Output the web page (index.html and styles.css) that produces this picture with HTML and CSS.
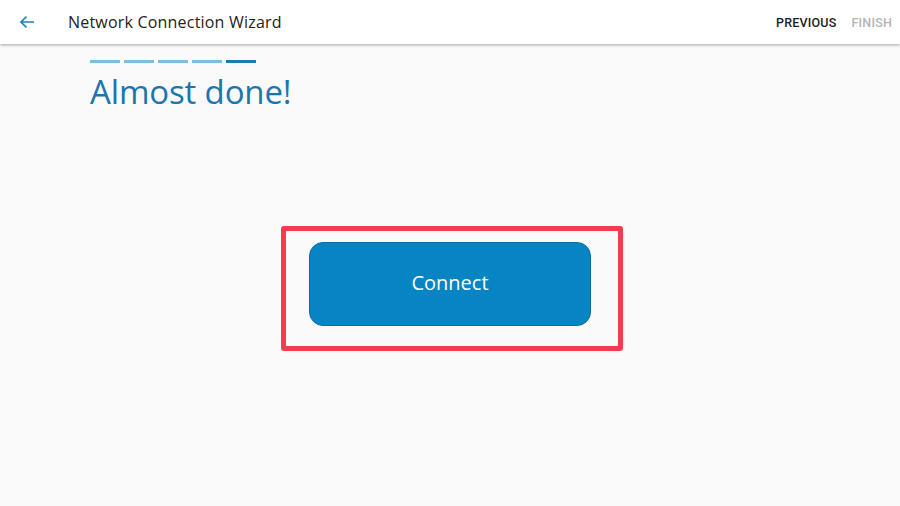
FILE: index.html
```html
<!DOCTYPE html>
<html>
<head>
<meta charset="utf-8">
<link rel="stylesheet" href="styles.css">
</head>
<body>
<header class="topbar">
  <div class="left">
    <span class="back">
      <svg width="16" height="14" viewBox="0 0 16 14"><path d="M15 7H2M7.5 1.5L2 7l5.5 5.5" fill="none" stroke="#1f7fbf" stroke-width="1.7"/></svg>
    </span>
    <span class="title">Network Connection Wizard</span>
  </div>
  <div class="actions">
    <span class="act prev">PREVIOUS</span>
    <span class="act fin">FINISH</span>
  </div>
</header>
<main class="content">
  <div class="steps">
    <span class="step"></span><span class="step"></span><span class="step"></span><span class="step"></span><span class="step cur"></span>
  </div>
  <h1 class="heading">Almost done!</h1>
  <div class="center">
    <div class="highlight">
      <button class="connect">Connect</button>
    </div>
  </div>
</main>
</body>
</html>
```
FILE: styles.css
```css
html, body { margin: 0; padding: 0; }
body {
  width: 900px; height: 506px; overflow: hidden;
  background: #fafafa;
  font-family: Roboto, "Open Sans", sans-serif;
}
.topbar {
  height: 44px; background: #fff;
  box-shadow: 0 1px 3px rgba(0,0,0,0.35);
  display: flex; align-items: center; justify-content: space-between;
  position: relative; z-index: 1;
}
.left { display: flex; align-items: center; }
.back { width: 16px; height: 14px; margin-left: 19px; margin-right: 33px; display: flex; margin-top: -1px; }
.title { font-size: 16px; color: #222; font-family: "Open Sans", Roboto, sans-serif; letter-spacing: 0.2px; }
.actions { display: flex; gap: 15px; margin-right: 8px; }
.act { font-size: 12.5px; font-weight: 500; letter-spacing: 0.2px; }
.prev { color: #1e1e1e; }
.fin { color: #b5b5b5; }
.content { padding: 16px 0 0 90px; }
.steps { display: flex; gap: 4px; }
.step { width: 30px; height: 3px; background: #7bbfe0; }
.step.cur { background: #1d7ab5; }
.heading {
  margin: 9px 0 0 0; font-weight: 400; font-size: 33px; color: #1a76ad;
  font-family: "Open Sans", Roboto, sans-serif; letter-spacing: -0.15px; line-height: 40px;
}
.center { display: flex; margin-top: 114px; margin-left: 191px; }
.highlight {
  border: 5px solid #f43c4c; border-radius: 3px;
  padding: 11px 27px 20px 23px;
}
.connect {
  width: 282px; height: 84px; border-radius: 14px;
  background: #0784c3; border: 1px solid #0a6fa5;
  color: #fff; font-size: 20px; font-family: "Open Sans", Roboto, sans-serif;
  display: block; padding: 0 0 3px 0;
}
```
